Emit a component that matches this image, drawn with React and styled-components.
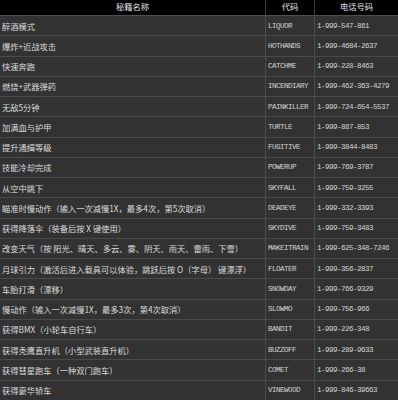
import styled, { createGlobalStyle } from 'styled-components'

const cheats = [
    ['醉酒模式', 'LIQUOR', '1-999-547-861'],
    ['爆炸+近战攻击', 'HOTHANDS', '1-999-4684-2637'],
    ['快速奔跑', 'CATCHME', '1-999-228-8463'],
    ['燃烧+武器弹药', 'INCENDIARY', '1-999-462-363-4279'],
    ['无敌5分钟', 'PAINKILLER', '1-999-724-654-5537'],
    ['加满血与护甲', 'TURTLE', '1-999-887-853'],
    ['提升通缉等级', 'FUGITIVE', '1-999-3844-8483'],
    ['技能冷却完成', 'POWERUP', '1-999-769-3787'],
    ['从空中跳下', 'SKYFALL', '1-999-759-3255'],
    ['瞄准时慢动作（输入一次减慢1X，最多4次，第5次取消）', 'DEADEYE', '1-999-332-3393'],
    ['获得降落伞（装备后按 X 键使用）', 'SKYDIVE', '1-999-759-3483'],
    ['改变天气（按 阳光、晴天、多云、雾、阴天、雨天、雷雨、下雪）', 'MAKEITRAIN', '1-999-625-348-7246'],
    ['月球引力（激活后进入载具可以体验，跳跃后按 O（字母） 键漂浮）', 'FLOATER', '1-999-356-2837'],
    ['车胎打滑（漂移）', 'SNOWDAY', '1-999-766-9329'],
    ['慢动作（输入一次减慢1X，最多3次，第4次取消）', 'SLOWMO', '1-999-756-966'],
    ['获得BMX（小轮车自行车）', 'BANDIT', '1-999-226-348'],
    ['获得秃鹰直升机（小型武装直升机）', 'BUZZOFF', '1-999-289-9633'],
    ['获得彗星跑车（一种双门跑车）', 'COMET', '1-999-266-38'],
    ['获得豪华轿车', 'VINEWOOD', '1-999-846-39663'],
]

export default function App() {
    return (
        <>
        <GlobalStyle />
        <Table>
            <HeadCell>秘籍名称</HeadCell>
            <HeadCell>代码</HeadCell>
            <HeadCell last>电话号码</HeadCell>
            {cheats.map(([name, code, phone]) => (
                <Row key={code}>
                    <NameCell>{name}</NameCell>
                    <CodeCell>{code}</CodeCell>
                    <CodeCell last>{phone}</CodeCell>
                </Row>
            ))}
        </Table>
        </>
    )
}

// Styled Components
const GlobalStyle = createGlobalStyle`
body {
    margin: 0;
    background: #323232;
    overflow: hidden;
}
`

const Table = styled.div`
    display: grid;
    grid-template-columns: 266px 49px 1fr;
    width: 398px;
    font-family: "Noto Sans CJK SC", sans-serif;
    color: #dcdcdc;
`

const HeadCell = styled.div`
    height: 15px;
    line-height: 13px;
    background: #000;
    text-align: center;
    font-size: 8.3px;
    color: #e2e2e2;
    border-right: ${p => (p.last ? 'none' : '1px solid #3a3a3a')};
    border-bottom: 1px solid #4e4e4e;
`

const Row = styled.div`
    display: contents;
`

const cell = `
    height: 19.25px;
    display: flex;
    align-items: center;
    background: #323232;
    border-bottom: 1px solid #4a4a4a;
    white-space: nowrap;
    overflow: hidden;
`

const NameCell = styled.div`
    ${cell}
    padding-left: 2px;
    font-size: 8.25px;
    border-right: 1px solid #4c4c4c;
`

const CodeCell = styled.div`
    ${cell}
    padding-left: 2px;
    font-family: "Liberation Mono", monospace;
    font-size: 7.6px;
    letter-spacing: -0.55px;
    color: #d2d2d2;
    border-right: ${p => (p.last ? 'none' : '1px solid #4c4c4c')};
`
